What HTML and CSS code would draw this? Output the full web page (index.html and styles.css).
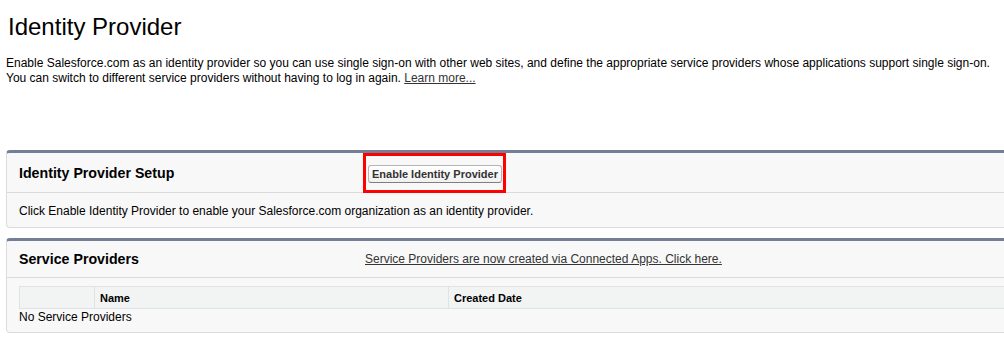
FILE: index.html
```html
<!DOCTYPE html>
<html lang="en">
<head>
    <meta charset="UTF-8">
    <title>Identity Provider</title>
    <link rel="stylesheet" href="styles.css">
</head>
<body>
    <div class="page">
        <h1>Identity Provider</h1>
        <p class="intro">
            Enable Salesforce.com as an identity provider so you can use single sign-on with other web sites, and define the appropriate service providers whose applications support single sign-on.<br>
            You can switch to different service providers without having to log in again. <a href="#">Learn more...</a>
        </p>

        <div class="panel first">
            <div class="panel-head">
                <h2>Identity Provider Setup</h2>
                <div class="highlight">
                    <button type="button">Enable Identity Provider</button>
                </div>
            </div>
            <div class="panel-body">
                Click Enable Identity Provider to enable your Salesforce.com organization as an identity provider.
            </div>
        </div>

        <div class="panel">
            <div class="panel-head">
                <h2>Service Providers</h2>
                <a href="#" class="head-link">Service Providers are now created via Connected Apps. Click here.</a>
            </div>
            <div class="panel-table">
                <table>
                    <tr>
                        <th class="col-action"></th>
                        <th class="col-name">Name</th>
                        <th>Created Date</th>
                    </tr>
                </table>
                <div class="empty">No Service Providers</div>
            </div>
        </div>
    </div>
</body>
</html>
```

FILE: styles.css
```css
/* Basic Styles */
body {
    font-family: "Liberation Sans", Arial, sans-serif;
    margin: 0;
    padding: 0;
    background-color: white;
    color: #000;
    overflow: hidden;
}
.page {
    padding: 0 0 0 6px;
}
h1 {
    font-size: 24px;
    font-weight: normal;
    margin: 0;
    padding: 12px 0 0 2px;
    line-height: 30px;
}
.intro {
    font-size: 12px;
    line-height: 15px;
    margin: 0;
    padding: 14px 0 0 0;
    color: #000;
}
.intro a {
    color: #333;
}
.panel {
    margin-right: -20px;
    background-color: #f8f8f8;
    border: 1px solid #dddbda;
    border-top: 3px solid #747e96;
    border-radius: 4px;
}
.panel.first {
    margin-top: 64px;
    margin-bottom: 10px;
}
.panel-head {
    display: flex;
    align-items: center;
    height: 39px;
    padding-left: 12px;
    border-bottom: 1px solid #dddbda;
}
.panel-head h2 {
    font-size: 14.2px;
    font-weight: bold;
    margin: 0;
    width: 344px;
    color: #000;
}
.highlight {
    border: 3px solid #ff0000;
    padding: 8px 1px 7px 2px;
}
.highlight button {
    font-family: "Liberation Sans", Arial, sans-serif;
    font-size: 11px;
    font-weight: bold;
    color: #333;
    background: linear-gradient(#ffffff, #f1f1f1);
    border: 1px solid #b5b5b5;
    border-bottom-color: #7f7f7f;
    border-radius: 3px;
    padding: 2px 3px;
    height: 18px;
}
.panel-body {
    font-size: 12px;
    padding: 11px 12px 8px;
    line-height: 15px;
}
.panel + .panel .panel-head {
    height: 36px;
}
.head-link {
    font-size: 12px;
    color: #333;
    margin-left: 2px;
    margin-top: -1px;
}
.panel-table {
    padding: 8px 0 7px 12px;
}
table {
    width: 100%;
    border-collapse: collapse;
    border: 1px solid #e0e3e5;
    border-right: none;
}
th {
    background-color: #f2f3f3;
    font-size: 11px;
    font-weight: bold;
    text-align: left;
    height: 21px;
    padding: 0 5px;
    border-left: 1px solid #e0e3e5;
    color: #000;
}
th.col-action {
    width: 64px;
}
th.col-name {
    width: 343px;
}
.empty {
    font-size: 12px;
    line-height: 15px;
    padding-top: 1px;
}
```
